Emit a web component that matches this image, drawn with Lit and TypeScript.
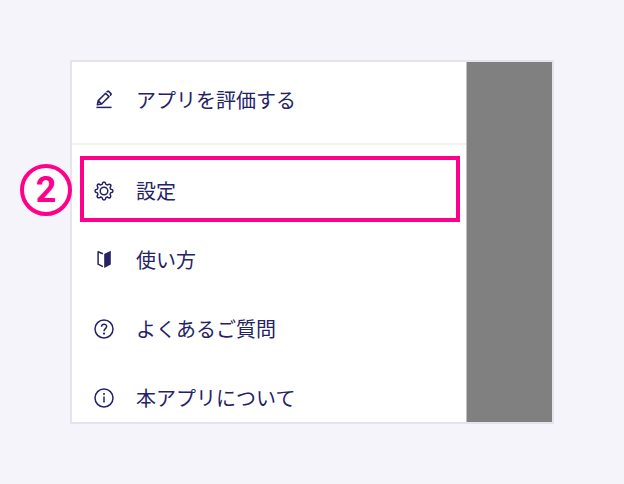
import { LitElement, html, css, svg } from "lit";
import { customElement } from "lit/decorators.js";

const icons = {
  rate: svg`<path d="M3.3 14.8 4.2 10.6 11.6 3.2 15 6.6 7.6 14ZM4.4 10.8 7.4 13.8M12.6 2.2 13.5 1.4Q14.1 .9 14.7 1.4L16.9 3.6Q17.4 4.2 16.9 4.7L16 5.6" /><path d="M2.4 17.4H17.6" />`,
  settings: svg`<path d="M8.2 3.2Q8.5 1 10 1T11.8 3.2Q12.5 3.8 13.5 3.9 15.3 2.6 16.4 3.6T16.1 6.5Q16.2 7.5 16.8 8.2 19 8.5 19 10T16.8 11.8Q16.2 12.5 16.1 13.5 17.4 15.3 16.4 16.4T13.5 16.1Q12.5 16.2 11.8 16.8 11.5 19 10 19T8.2 16.8Q7.5 16.2 6.5 16.1 4.7 17.4 3.6 16.4T3.9 13.5Q3.8 12.5 3.2 11.8 1 11.5 1 10T3.2 8.2Q3.8 7.5 3.9 6.5 2.6 4.7 3.6 3.6T6.5 3.9Q7.5 3.8 8.2 3.2Z" /><circle cx="10" cy="10" r="3.8" />`,
  guide: svg`<path d="M8.9 3.8 4.1 1.8V14.2L8.9 16.7" /><path class="solid" d="M10.2 4 16.8 .8V14.4L10.2 18Z" />`,
  faq: svg`<circle cx="10" cy="10" r="9" /><path d="M7.5 7.8C7.5 4.3 12.6 4.3 12.6 7.5 12.6 9.6 10 9.6 10 12.2" /><circle class="solid" cx="10" cy="14.6" r="1.1" />`,
  about: svg`<circle cx="10" cy="10" r="9" /><path d="M10 8.6V14.6" /><circle class="solid" cx="10" cy="6" r="1" />`,
};

@customElement("menu-item")
export class MenuItem extends LitElement {
  static properties = { icon: {}, label: {} };
  declare icon: keyof typeof icons;
  declare label: string;

  static styles = css`
    :host {
      display: block;
    }
    .link {
      display: flex;
      align-items: center;
      gap: 22px;
      padding: 0 22px;
      color: #252366;
      font-size: 20px;
      line-height: 29px;
      text-decoration: none;
    }
    .icon {
      flex: none;
      width: 20px;
      height: 20px;
      fill: none;
      stroke: currentColor;
      stroke-width: 1.5;
      stroke-linejoin: round;
    }
    .solid {
      fill: currentColor;
      stroke: none;
    }
  `;

  render() {
    return html`<a class="link" href="#${this.icon}">
      <svg class="icon" viewBox="0 0 20 20" aria-hidden="true">${icons[this.icon]}</svg>
      <span>${this.label}</span>
    </a>`;
  }
}

@customElement("app-root")
export class AppRoot extends LitElement {
  static styles = css`
    :host {
      display: block;
      box-sizing: border-box;
      min-height: 100vh;
      padding: 60px 70px;
      background: #f5f4fa;
      font-family: "Noto Sans CJK JP", sans-serif;
    }
    .frame {
      display: flex;
      border: 2px solid #e5e4ee;
      background: #808080;
    }
    .menu {
      flex: 1;
      border-right: 1px solid #c0c0c0;
      background: #fff;
    }
    .shade {
      flex: 0 0 85px;
    }
    .group {
      display: flex;
      flex-direction: column;
      gap: 40px;
      padding: 31px 0 10px;
    }
    .first {
      padding: 23px 0 29px;
      border-bottom: 2px solid #f2f2f2;
    }
    .marked {
      position: relative;
    }
    .outline {
      position: absolute;
      inset: -20px 6px -17px 8px;
      border: 4px solid #ff008c;
      pointer-events: none;
    }
    .badge {
      position: absolute;
      top: -12px;
      left: -52px;
      box-sizing: border-box;
      width: 52px;
      height: 52px;
      border: 4px solid #ff008c;
      border-radius: 50%;
      background: #fff;
      color: #ff008c;
      font: bold 36px/44px Roboto, sans-serif;
      text-align: center;
    }
  `;

  render() {
    return html`<main class="frame">
      <nav class="menu">
        <div class="group first">
          <menu-item icon="rate" label="アプリを評価する"></menu-item>
        </div>
        <div class="group">
          <div class="marked">
            <menu-item icon="settings" label="設定"></menu-item>
            <div class="outline"></div>
            <div class="badge">2</div>
          </div>
          <menu-item icon="guide" label="使い方"></menu-item>
          <menu-item icon="faq" label="よくあるご質問"></menu-item>
          <menu-item icon="about" label="本アプリについて"></menu-item>
        </div>
      </nav>
      <div class="shade"></div>
    </main>`;
  }
}
